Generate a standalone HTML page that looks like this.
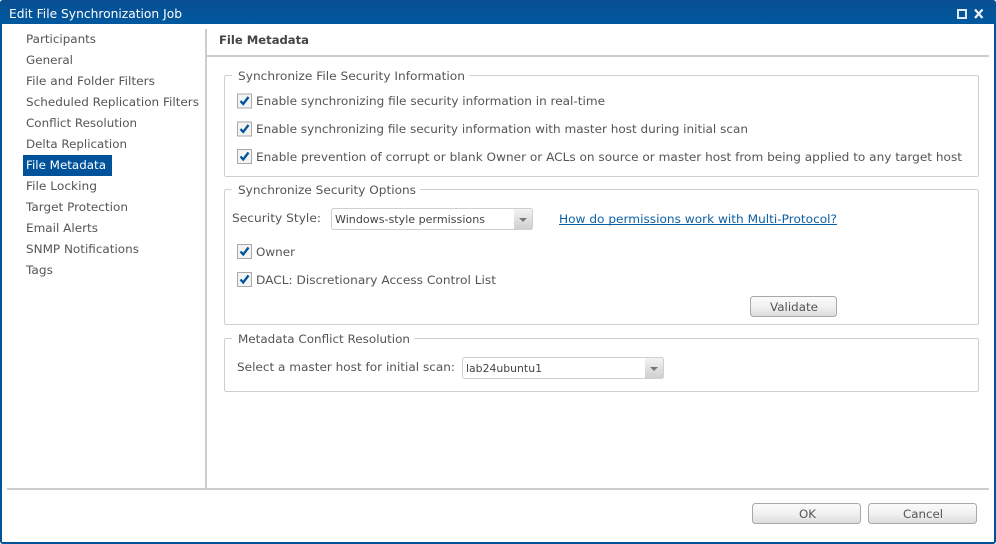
<!DOCTYPE html>
<html><head><meta charset="utf-8"><title>Edit File Synchronization Job</title>
<style>html,body{margin:0;padding:0;background:#fff;width:996px;height:544px;overflow:hidden}svg{display:block}
text{font-family:"DejaVu Sans","Liberation Sans",sans-serif;font-size:11.8px;fill:#555}
.s{font-size:11px;fill:#444}
</style></head><body>
<svg width="996" height="544" viewBox="0 0 996 544" xmlns="http://www.w3.org/2000/svg">
<defs>
<linearGradient id="t" x1="0" y1="0" x2="0" y2="1"><stop offset="0" stop-color="#0a4f92"/><stop offset="1" stop-color="#00589f"/></linearGradient>
<linearGradient id="b" x1="0" y1="0" x2="0" y2="1"><stop offset="0" stop-color="#fbfbfb"/><stop offset=".5" stop-color="#f1f1f1"/><stop offset="1" stop-color="#dcdcdc"/></linearGradient>
<linearGradient id="a" x1="0" y1="0" x2="0" y2="1"><stop offset="0" stop-color="#f3f3f3"/><stop offset="1" stop-color="#cfcfcf"/></linearGradient>
<g id="c"><rect x=".5" y=".5" width="14" height="14" fill="#f4f4f4" stroke="#a9a9a9"/><path d="M3.5 7.5L6.2 10.5L11.5 3.5" fill="none" stroke="#00539b" stroke-width="2.3"/></g>
<g id="ar"><path d="M0 0h8l-4 4z" fill="#777"/></g>
</defs>
<rect x="0" y="0" width="996" height="544" rx="3" fill="#00539b"/>
<rect x="2" y="24" width="992" height="518" fill="#fff"/>
<rect x="0" y="0" width="996" height="24" rx="3" fill="url(#t)"/>
<text x="9" y="18" textLength="173" lengthAdjust="spacingAndGlyphs" style="fill:#fff;font-size:12px">Edit File Synchronization Job</text>
<rect x="958" y="10" width="8" height="8" fill="none" stroke="#dfe9f3" stroke-width="2"/>
<path d="M975 9.5L982.5 18M982.5 9.5L975 18" stroke="#eef3f8" stroke-width="2.2" fill="none"/>

<rect x="205" y="29" width="2" height="460" fill="#cdcdcd"/>
<rect x="206" y="55" width="783" height="2" fill="#cdcdcd"/>
<rect x="7" y="488" width="982" height="2" fill="#cdcdcd"/>

<rect x="23" y="155" width="89" height="21" fill="#00539b"/>
<text x="26" y="43" textLength="70" lengthAdjust="spacingAndGlyphs">Participants</text>
<text x="26" y="64" textLength="47" lengthAdjust="spacingAndGlyphs">General</text>
<text x="26" y="85" textLength="129" lengthAdjust="spacingAndGlyphs">File and Folder Filters</text>
<text x="26" y="106" textLength="173" lengthAdjust="spacingAndGlyphs">Scheduled Replication Filters</text>
<text x="26" y="127" textLength="111" lengthAdjust="spacingAndGlyphs">Conflict Resolution</text>
<text x="26" y="148" textLength="101" lengthAdjust="spacingAndGlyphs">Delta Replication</text>
<text x="26" y="169" textLength="80" lengthAdjust="spacingAndGlyphs" style="fill:#fff">File Metadata</text>
<text x="26" y="190" textLength="71" lengthAdjust="spacingAndGlyphs">File Locking</text>
<text x="26" y="211" textLength="102" lengthAdjust="spacingAndGlyphs">Target Protection</text>
<text x="26" y="232" textLength="72" lengthAdjust="spacingAndGlyphs">Email Alerts</text>
<text x="26" y="253" textLength="113" lengthAdjust="spacingAndGlyphs">SNMP Notifications</text>
<text x="26" y="274" textLength="27" lengthAdjust="spacingAndGlyphs">Tags</text>

<text x="219" y="44" textLength="90" lengthAdjust="spacingAndGlyphs" style="font-weight:bold;fill:#444">File Metadata</text>

<path d="M232 75.5H226.5Q224.5 75.5 224.5 77.5V174.5Q224.5 176.5 226.5 176.5H976.5Q978.5 176.5 978.5 174.5V77.5Q978.5 75.5 976.5 75.5H469" fill="none" stroke="#cfcfcf"/>
<text x="238" y="80" textLength="227" lengthAdjust="spacingAndGlyphs">Synchronize File Security Information</text>
<use href="#c" x="237" y="93.5"/>
<text x="256" y="105" textLength="349" lengthAdjust="spacingAndGlyphs">Enable synchronizing file security information in real-time</text>
<use href="#c" x="237" y="121.5"/>
<text x="256" y="133" textLength="492" lengthAdjust="spacingAndGlyphs">Enable synchronizing file security information with master host during initial scan</text>
<use href="#c" x="237" y="149"/>
<text x="256" y="161" textLength="706" lengthAdjust="spacingAndGlyphs">Enable prevention of corrupt or blank Owner or ACLs on source or master host from being applied to any target host</text>

<path d="M232 189.5H226.5Q224.5 189.5 224.5 191.5V322.5Q224.5 324.5 226.5 324.5H976.5Q978.5 324.5 978.5 322.5V191.5Q978.5 189.5 976.5 189.5H420" fill="none" stroke="#cfcfcf"/>
<text x="238" y="194" textLength="178" lengthAdjust="spacingAndGlyphs">Synchronize Security Options</text>
<text x="232" y="222" textLength="89" lengthAdjust="spacingAndGlyphs">Security Style:</text>
<rect x="331.5" y="208.5" width="201" height="21" rx="2" fill="#fff" stroke="#d0d0d0"/>
<rect x="514" y="209" width="18" height="20" fill="url(#a)"/>
<use href="#ar" x="519" y="218"/>
<text class="s" x="335" y="223" textLength="150" lengthAdjust="spacingAndGlyphs">Windows-style permissions</text>
<text x="559" y="223" textLength="278" lengthAdjust="spacingAndGlyphs" style="fill:#0b5fa5">How do permissions work with Multi-Protocol?</text>
<rect x="559" y="224" width="278" height="1" fill="#0b5fa5"/>
<use href="#c" x="237" y="244"/>
<text x="256" y="256" textLength="39" lengthAdjust="spacingAndGlyphs">Owner</text>
<use href="#c" x="237" y="272"/>
<text x="256" y="284" textLength="240" lengthAdjust="spacingAndGlyphs">DACL: Discretionary Access Control List</text>
<rect x="750.5" y="296.5" width="86" height="20" rx="3" fill="url(#b)" stroke="#a8a8a8"/>
<text x="770" y="311" textLength="48" lengthAdjust="spacingAndGlyphs">Validate</text>

<path d="M232 338.5H226.5Q224.5 338.5 224.5 340.5V389.5Q224.5 391.5 226.5 391.5H976.5Q978.5 391.5 978.5 389.5V340.5Q978.5 338.5 976.5 338.5H414" fill="none" stroke="#cfcfcf"/>
<text x="238" y="343" textLength="172" lengthAdjust="spacingAndGlyphs">Metadata Conflict Resolution</text>
<text x="237" y="371" textLength="218" lengthAdjust="spacingAndGlyphs">Select a master host for initial scan:</text>
<rect x="462.5" y="357.5" width="201" height="21" rx="2" fill="#fff" stroke="#d0d0d0"/>
<rect x="645" y="358" width="18" height="20" fill="url(#a)"/>
<use href="#ar" x="650" y="367"/>
<text class="s" x="466" y="372" textLength="76" lengthAdjust="spacingAndGlyphs">lab24ubuntu1</text>

<rect x="752.5" y="503.5" width="108" height="20" rx="3" fill="url(#b)" stroke="#a8a8a8"/>
<text x="799" y="518" textLength="17" lengthAdjust="spacingAndGlyphs">OK</text>
<rect x="868.5" y="503.5" width="108" height="20" rx="3" fill="url(#b)" stroke="#a8a8a8"/>
<text x="903" y="518" textLength="40" lengthAdjust="spacingAndGlyphs">Cancel</text>
</svg>
</body></html>
